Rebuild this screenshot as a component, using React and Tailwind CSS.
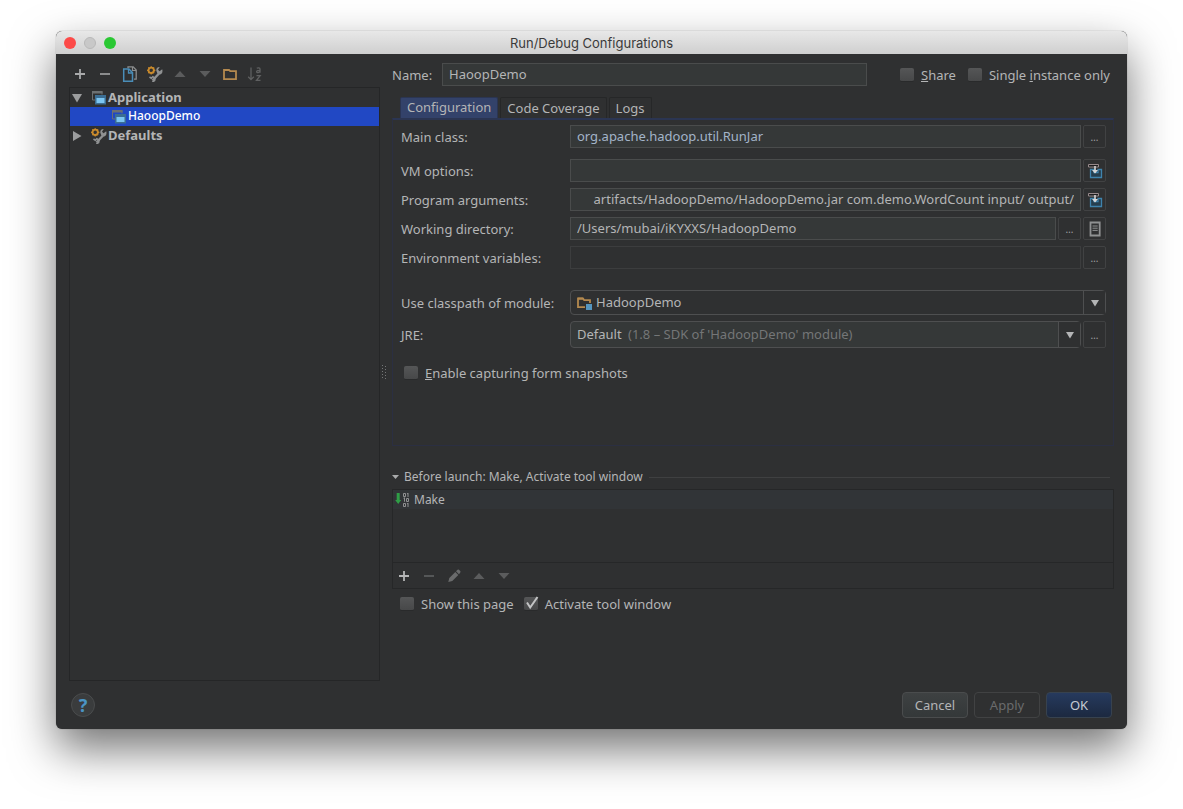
import React from "react";

const treeItems = [
  { id: 1, name: "Application", icon: "app", level: 0, open: true },
  { id: 2, name: "HaoopDemo", icon: "app", level: 1, selected: true },
  { id: 3, name: "Defaults", icon: "wrench", level: 0, open: false },
];

const tabs = [
  { id: 1, name: "Configuration", active: true },
  { id: 2, name: "Code Coverage" },
  { id: 3, name: "Logs" },
];

const PlusIcon = ({ className }) => (
  <svg viewBox="0 0 16 16" className={`size-4 ${className}`}>
    <path d="M8 3v10M3 8h10" stroke="currentColor" strokeWidth="1.800" fill="none" />
  </svg>
);

const MinusIcon = ({ className }) => (
  <svg viewBox="0 0 16 16" className={`size-4 ${className}`}>
    <path d="M3 8h10" stroke="currentColor" strokeWidth="1.800" fill="none" />
  </svg>
);

const UpIcon = () => (
  <svg viewBox="0 0 16 16" className="size-4 text-[#5b5c5d]">
    <path d="M8 5l5.5 6h-11z" fill="currentColor" />
  </svg>
);

const DownIcon = () => (
  <svg viewBox="0 0 16 16" className="size-4 text-[#5b5c5d]">
    <path d="M8 11l5.5-6h-11z" fill="currentColor" />
  </svg>
);

const CopyIcon = () => (
  <svg viewBox="0 0 16 16" className="size-4" fill="none">
    <path d="M6 2V.8h5.2L14.2 4v9.200H12" stroke="#8b8d8e" strokeWidth="1.3" />
    <path d="M10.500 1v3.500h3.500" stroke="#8b8d8e" strokeWidth="1.200" />
    <path d="M1.700 3h5.200l3.600 3.600v8.700H1.700z" stroke="#4a8db8" strokeWidth="1.500" />
    <path d="M6.500 3v4h4" stroke="#4a8db8" strokeWidth="1.300" />
  </svg>
);

const WrenchIcon = () => (
  <svg viewBox="0 0 16 16" className="size-4 shrink-0" fill="none">
    <path d="M5.500 14.500L12 7.500" stroke="#8f9192" strokeWidth="2.400" />
    <path
      d="M15.200 3.200l-2.600 2-1.600-1.400 1.700-2.800C10.500.8 8.800 2.600 9.400 4.900l1 2.600 2.200 1c1.900.2 3.600-2.200 2.600-5.300z"
      fill="#8f9192"
    />
    <path d="M2.500 11l1.800 1.300 1.500-1.600 2.200 1.500-.4 2.300-2.200 1.500" stroke="#8f9192" strokeWidth="1.600" />
    <circle cx="4.200" cy="4.300" r="2.700" stroke="#c98a2c" strokeWidth="1.900" />
    <path
      d="M4.200.2v1.500M4.200 7v1.500M.1 4.300h1.500M6.900 4.300h1.500M1.300 1.400l1 1M6.100 6.200l1 1M7.100 1.400l-1 1M2.300 6.200l-1 1"
      stroke="#c98a2c"
      strokeWidth="1.200"
    />
  </svg>
);

const FolderIcon = () => (
  <svg viewBox="0 0 16 16" className="size-4" fill="none">
    <path d="M2 13.200V3.800h5l1.200 1.400H14v8z" stroke="#b4894f" strokeWidth="1.800" />
    <path d="M2 3h5v2H2z" fill="#b4894f" />
  </svg>
);

const SortIcon = () => (
  <svg viewBox="0 0 16 16" className="size-4" fill="none" stroke="#5f6061" strokeWidth="1.300">
    <path d="M4 1.500v12M1.200 10.800L4 13.600l2.800-2.800" />
    <path d="M9.800 2.300c1-.8 3.200-.7 3.200.8v3.600M13 4.300c-1.800 0-3.500.2-3.400 1.400.1 1.400 2.600 1.200 3.400-.3" />
    <path d="M9.500 9.600h3.700l-3.700 4.800h4" />
  </svg>
);

const AppIcon = () => (
  <svg viewBox="0 0 16 16" className="size-4 shrink-0">
    <path d="M1.500 1.500h9.500v3M1.500 1.500v8.500h3" fill="none" stroke="#6c7072" />
    <path d="M1 1h10.500v2.500H1z" fill="#6c7072" />
    <path d="M4 5h11v9.500H4z" fill="#3b6e94" />
    <path d="M5.500 8h8v5h-8z" fill="#7cc6f2" />
  </svg>
);

const ModuleIcon = () => (
  <svg viewBox="0 0 16 16" className="size-4" fill="none">
    <path d="M9 12.200H2V3.500h5l1.200 1.700H14V8" stroke="#b4894f" strokeWidth="1.800" />
    <path d="M2 2.600h5v2H2z" fill="#b4894f" />
    <path d="M10 9h6v6h-6z" fill="#5596c0" />
  </svg>
);

const InsertIcon = () => (
  <svg viewBox="0 0 16 16" className="size-4" fill="none">
    <path d="M3.500 6.500H7v3h4v-3h3.500v8h-11z" fill="#263e4e" stroke="#3f83ad" strokeWidth="1.300" />
    <path d="M1.500 1.500h10v2.500h-10z" fill="#1d1e1f" stroke="#96898b" />
    <path d="M8 3v6.500" stroke="#d5d7d8" strokeWidth="1.600" />
    <path d="M5 7h6l-3 3.500z" fill="#d5d7d8" />
  </svg>
);

const DocIcon = () => (
  <svg viewBox="0 0 16 16" className="size-4" fill="none">
    <path d="M3.500 1.500h9.200v13H3.500z" stroke="#8f9192" strokeWidth="1.800" />
    <path d="M5.500 5h5.200M5.500 7.200h5.200M5.500 9.400h5.200" stroke="#8f9192" />
  </svg>
);

const PencilIcon = () => (
  <svg viewBox="0 0 16 16" className="size-4 text-[#6a6b6c]">
    <path d="M2.300 13.900l1-4 6-6 3 3-6 6zM10 3.200l1.500-1.500 1.200-.2 1.800 1.800-.2 1.200L13 6.200z" fill="currentColor" />
  </svg>
);

const MakeIcon = () => (
  <svg viewBox="0 0 16 16" className="size-4" fill="none">
    <path d="M1.700 1h3v7h1.500l-3 4-3-4h1.500z" fill="#2f9e46" />
    <g stroke="#9a9b9c" strokeWidth="0.900">
      <path d="M8.500 1.500h2v3h-2zM13 1v4M12 1.700h1M8.500 6.200l1-.5v4M11.500 6.500h2v3h-2zM8.500 11.500h2v3h-2zM13 11v4M12 11.700h1" />
    </g>
  </svg>
);

const IconButton = ({ label, children }) => (
  <button type="button" aria-label={label} className="flex size-[25px] items-center pl-[3px]">
    {children}
  </button>
);

const CheckBox = ({ checked, children }) => (
  <label className="flex items-center gap-[7px]">
    <span className="relative flex size-3.5">
      <input
        type="checkbox"
        defaultChecked={checked}
        className="peer size-3.5 appearance-none rounded-xs border-b border-[#292a2b] bg-linear-to-b from-[#555657] to-[#474849]"
      />
      <svg
        viewBox="0 0 14 14"
        className="pointer-events-none absolute inset-0 hidden size-3.5 overflow-visible peer-checked:block"
      >
        <path d="M3 5.500l3.200 5L13.500 0" fill="none" stroke="#c3c4c5" strokeWidth="2" />
      </svg>
    </span>
    <span className="whitespace-nowrap">{children}</span>
  </label>
);

const SideButton = ({ label, children }) => (
  <button
    type="button"
    aria-label={label}
    className="flex w-[23px] shrink-0 items-center justify-center self-stretch rounded-xs border border-[#414243] text-[10px] text-[#a0a1a2]"
  >
    {children}
  </button>
);

const FieldRow = ({ id, label, children }) => (
  <div className="flex items-center">
    <label htmlFor={id} className="w-[169px] shrink-0 whitespace-nowrap">
      {label}
    </label>
    <div className="flex min-w-0 grow gap-0.5">{children}</div>
  </div>
);

const inputStyle = "h-[23px] min-w-0 grow border border-[#4a4c4c] bg-[#353838] px-1.5 pb-px outline-none";

const Sidebar = () => (
  <aside className="flex w-[311px] shrink-0 flex-col">
    <div className="flex h-[33px] items-center pt-[7px]">
      <IconButton label="Add">
        <PlusIcon className="text-[#a9aaab]" />
      </IconButton>
      <IconButton label="Remove">
        <MinusIcon className="text-[#8b8c8d]" />
      </IconButton>
      <IconButton label="Copy">
        <CopyIcon />
      </IconButton>
      <IconButton label="Edit defaults">
        <WrenchIcon />
      </IconButton>
      <IconButton label="Move up">
        <UpIcon />
      </IconButton>
      <IconButton label="Move down">
        <DownIcon />
      </IconButton>
      <IconButton label="Create folder">
        <FolderIcon />
      </IconButton>
      <IconButton label="Sort">
        <SortIcon />
      </IconButton>
    </div>
    <ul className="grow border border-[#252627]">
      {treeItems.map((item) => (
        <li
          key={item.id}
          className={`flex h-[19px] items-center ${
            item.selected ? "bg-[#2148c4] pl-[41px] text-xs font-medium text-white" : "pl-px font-bold"
          }`}
        >
          {item.level === 0 && (
            <svg viewBox="0 0 12 12" className="mr-2 size-3 text-[#9c9d9e]">
              <path d={item.open ? "M1 2h10L6 10.500z" : "M2 1v10l8.500-5z"} fill="currentColor" />
            </svg>
          )}
          {item.icon === "app" ? <AppIcon /> : <WrenchIcon />}
          <span className="pb-px pl-px">{item.name}</span>
        </li>
      ))}
    </ul>
  </aside>
);

const ConfigurationPanel = () => (
  <div className="h-[328px] border border-t-2 border-[#2b2f42] border-t-[#2b3552] pt-[5px] pr-[7px] pl-2">
    <div className="flex flex-col gap-1.5">
      <FieldRow id="main" label="Main class:">
        <input id="main" defaultValue="org.apache.hadoop.util.RunJar" className={`${inputStyle} text-[#a3b4c8]`} />
        <SideButton label="Browse main class">…</SideButton>
      </FieldRow>
      <div className="pt-[5px]">
        <FieldRow id="vm" label="VM options:">
          <input id="vm" className={inputStyle} />
          <SideButton label="Expand VM options">
            <InsertIcon />
          </SideButton>
        </FieldRow>
      </div>
      <FieldRow id="args" label="Program arguments:">
        <input
          id="args"
          defaultValue="artifacts/HadoopDemo/HadoopDemo.jar com.demo.WordCount input/ output/"
          className={`${inputStyle} text-right`}
        />
        <SideButton label="Expand program arguments">
          <InsertIcon />
        </SideButton>
      </FieldRow>
      <FieldRow id="dir" label="Working directory:">
        <input id="dir" defaultValue="/Users/mubai/iKYXXS/HadoopDemo" className={inputStyle} />
        <SideButton label="Browse directory">…</SideButton>
        <SideButton label="Insert macro">
          <DocIcon />
        </SideButton>
      </FieldRow>
      <FieldRow id="env" label="Environment variables:">
        <input id="env" className="h-[23px] min-w-0 grow border border-[#3c3d3e] px-1.5 outline-none" />
        <SideButton label="Edit variables">…</SideButton>
      </FieldRow>
    </div>
    <div className="flex flex-col gap-1.5 pt-[21px]">
      <FieldRow id="module" label="Use classpath of module:">
        <div className="relative flex grow">
          <select
            id="module"
            className="h-[25px] w-full appearance-none rounded-sm border border-[#4e4f50] pb-px pl-[25px] outline-none"
          >
            <option>HadoopDemo</option>
          </select>
          <span className="pointer-events-none absolute inset-y-0 left-1.5 flex items-center">
            <ModuleIcon />
          </span>
          <SelectArrow />
        </div>
      </FieldRow>
      <FieldRow id="jre" label="JRE:">
        <div className="relative flex grow">
          <select
            id="jre"
            className="h-[27px] w-full appearance-none rounded-sm border border-[#4e4f50] bg-[#353838] pb-px pl-1.5 outline-none"
          >
            <option>Default</option>
          </select>
          <span className="pointer-events-none absolute inset-y-0 left-[58px] flex items-center pb-px text-[#747677]">
            (1.8 – SDK of 'HadoopDemo' module)
          </span>
          <SelectArrow />
        </div>
        <SideButton label="Browse JRE">…</SideButton>
      </FieldRow>
    </div>
    <div className="flex px-[3px] pt-[15px]">
      <CheckBox>
        <u>E</u>nable capturing form snapshots
      </CheckBox>
    </div>
  </div>
);

const SelectArrow = () => (
  <span className="pointer-events-none absolute inset-y-px right-px flex w-[22px] items-center justify-center border-l border-[#4e4f50] bg-[#2f3031]">
    <svg viewBox="0 0 8 8" className="size-2 text-[#b4b5b6]">
      <path d="M0 1h8L4 7.500z" fill="currentColor" />
    </svg>
  </span>
);

const BeforeLaunch = () => (
  <section className="pt-[21px]">
    <div className="flex h-5 items-center text-xs">
      <svg viewBox="0 0 8 8" className="mr-1 size-2 text-[#a9aaab]">
        <path d="M0 2h7L3.500 6z" fill="currentColor" />
      </svg>
      <h2>Before launch: Make, Activate tool window</h2>
      <span className="ml-1.5 mr-1 h-px grow bg-[#3f4041]" />
    </div>
    <div className="mt-0.5 border border-[#262728]">
      <ul className="h-[72px]">
        <li className="flex h-[19px] items-center gap-[3px] bg-[#313437] pl-0.5 text-xs">
          <MakeIcon />
          Make
        </li>
      </ul>
      <div className="flex h-[26px] items-center border-t border-[#262728]">
        <IconButton label="Add task">
          <PlusIcon className="text-[#b4b5b6]" />
        </IconButton>
        <IconButton label="Remove task">
          <MinusIcon className="text-[#5b5c5d]" />
        </IconButton>
        <IconButton label="Edit task">
          <PencilIcon />
        </IconButton>
        <IconButton label="Move task up">
          <UpIcon />
        </IconButton>
        <IconButton label="Move task down">
          <DownIcon />
        </IconButton>
      </div>
    </div>
    <div className="flex gap-2.5 px-2 pt-[5px]">
      <CheckBox>Show this page</CheckBox>
      <CheckBox checked>Activate tool window</CheckBox>
    </div>
  </section>
);

const App = () => {
  return (
    <div className="flex min-h-screen flex-col bg-white px-14 pb-20 pt-[31px] font-['Noto_Sans',sans-serif] text-[13px] leading-5 text-[#b4b5b6]">
      <main className="flex grow flex-col overflow-hidden rounded-md bg-[#2f3031] shadow-[0_20px_45px_rgba(0,0,0,0.55),0_0_1px_rgba(0,0,0,0.5)]">
        <header className="relative flex h-[23px] items-center justify-center bg-linear-to-b from-[#e8e8e8] to-[#cfcfcf] font-['Inter',sans-serif]">
          <div className="absolute inset-y-0 left-2 flex items-center gap-2">
            <button type="button" aria-label="Close" className="size-3 rounded-full bg-[#fc4a48]" />
            <button type="button" aria-label="Minimize" className="size-3 rounded-full border border-[#b8b8b8] bg-[#c8c8c8]" />
            <button type="button" aria-label="Zoom" className="size-3 rounded-full bg-[#2ac833]" />
          </div>
          <h1 className="text-[#3b3b3b]">Run/Debug Configurations</h1>
        </header>

        <div className="flex grow px-[13px]">
          <Sidebar />
          <div className="flex w-3 items-center pt-2 pl-0.5">
            <svg viewBox="0 0 4 14" className="h-3.5 w-1 text-[#747677]">
              <path d="M.5 0v14M3.500 1v14" stroke="currentColor" strokeDasharray="1 2" />
            </svg>
          </div>
          <div className="flex min-w-0 grow flex-col pt-[9px]">
            <div className="flex items-center">
              <label htmlFor="name" className="w-[50px] shrink-0">
                Name:
              </label>
              <input id="name" defaultValue="HaoopDemo" className={inputStyle} />
              <div className="ml-[33px] flex gap-3 pr-1">
                <CheckBox>
                  <u>S</u>hare
                </CheckBox>
                <CheckBox>
                  Single <u>i</u>nstance only
                </CheckBox>
              </div>
            </div>

            <div role="tablist" className="mt-[11px] flex gap-0.5 px-2">
              {tabs.map((tab) => (
                <button
                  key={tab.id}
                  type="button"
                  role="tab"
                  aria-selected={!!tab.active}
                  className={`h-[21px] rounded-t-xs border border-b-0 px-1.5 leading-[18px] ${
                    tab.active ? "border-[#2b3552] bg-[#33426a] pb-1" : "border-[#262728]"
                  }`}
                >
                  {tab.name}
                </button>
              ))}
            </div>
            <ConfigurationPanel />
            <BeforeLaunch />
          </div>
        </div>

        <footer className="flex h-12 items-center justify-between px-[15px]">
          <button
            type="button"
            aria-label="Help"
            className="size-6 rounded-full border border-[#4a4c4d] bg-[#3a3c3d] text-lg leading-5 font-bold text-[#4a94c4]"
          >
            ?
          </button>
          <div className="flex gap-1.5">
            <button
              type="button"
              className="h-[26px] w-[66px] rounded-sm border border-[#4a4c4d] bg-linear-to-b from-[#3e4142] to-[#343839]"
            >
              Cancel
            </button>
            <button type="button" disabled className="h-[26px] w-[66px] rounded-sm border border-[#414243] text-[#6a6b6c]">
              Apply
            </button>
            <button
              type="button"
              className="h-[26px] w-[66px] rounded-sm border border-[#37424f] bg-linear-to-b from-[#263a5e] to-[#1c2940] text-[#c6cbd3]"
            >
              OK
            </button>
          </div>
        </footer>
      </main>
    </div>
  );
};

export default App;
